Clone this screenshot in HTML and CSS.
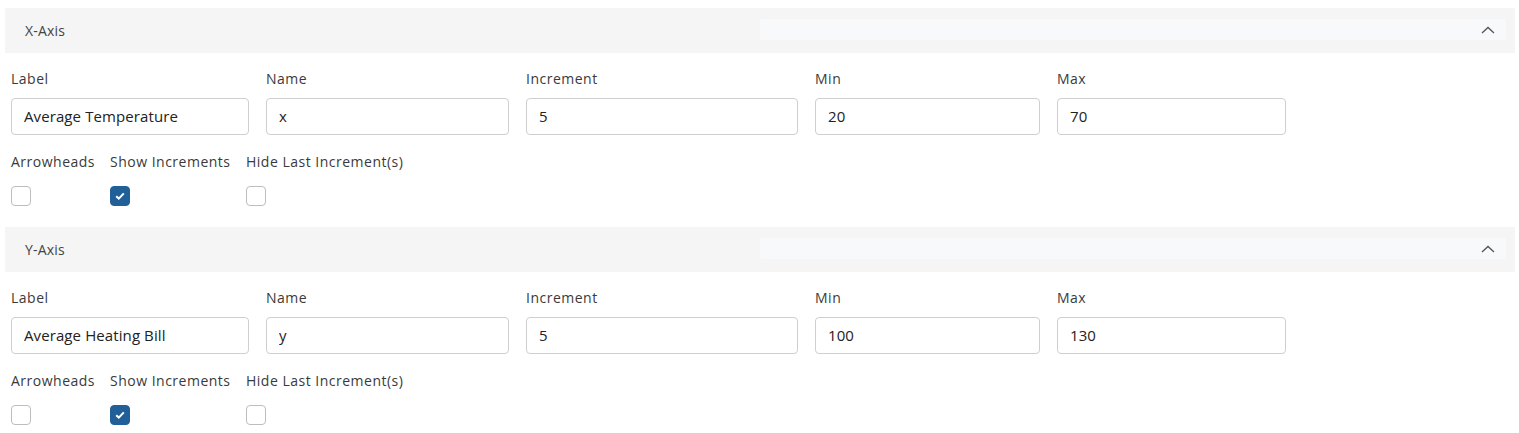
FILE: index.html
```html
<!DOCTYPE html>
<html lang="en">
<head>
  <meta charset="UTF-8">
  <meta name="viewport" content="width=device-width, initial-scale=1.0">
  <title>Axis settings</title>
  <link rel="stylesheet" href="styles.css">
</head>
<body>
  <div class="panel">
    <div class="section">
      <div class="section-head">
        <span class="section-title">X-Axis</span>
        <div class="head-fill"></div>
        <svg class="chevron" width="14" height="8" viewBox="0 0 14 8"><path d="M1 7 L7 1.5 L13 7" fill="none" stroke="#555" stroke-width="1.3"/></svg>
      </div>
      <div class="fields">
        <div class="field"><label>Label</label><input type="text" value="Average Temperature"></div>
        <div class="field"><label>Name</label><input type="text" value="x"></div>
        <div class="field"><label>Increment</label><input type="text" value="5"></div>
        <div class="field"><label>Min</label><input type="text" value="20"></div>
        <div class="field"><label>Max</label><input type="text" value="70"></div>
      </div>
      <div class="checks">
        <div class="check"><label>Arrowheads</label><span class="box"></span></div>
        <div class="check"><label>Show Increments</label><span class="box on"><svg width="10" height="8" viewBox="0 0 10 8"><path d="M1.2 4.2 L3.8 6.6 L8.8 1.4" fill="none" stroke="#fff" stroke-width="2"/></svg></span></div>
        <div class="check"><label>Hide Last Increment(s)</label><span class="box"></span></div>
      </div>
    </div>

    <div class="section">
      <div class="section-head">
        <span class="section-title">Y-Axis</span>
        <div class="head-fill"></div>
        <svg class="chevron" width="14" height="8" viewBox="0 0 14 8"><path d="M1 7 L7 1.5 L13 7" fill="none" stroke="#555" stroke-width="1.3"/></svg>
      </div>
      <div class="fields">
        <div class="field"><label>Label</label><input type="text" value="Average Heating Bill"></div>
        <div class="field"><label>Name</label><input type="text" value="y"></div>
        <div class="field"><label>Increment</label><input type="text" value="5"></div>
        <div class="field"><label>Min</label><input type="text" value="100"></div>
        <div class="field"><label>Max</label><input type="text" value="130"></div>
      </div>
      <div class="checks">
        <div class="check"><label>Arrowheads</label><span class="box"></span></div>
        <div class="check"><label>Show Increments</label><span class="box on"><svg width="10" height="8" viewBox="0 0 10 8"><path d="M1.2 4.2 L3.8 6.6 L8.8 1.4" fill="none" stroke="#fff" stroke-width="2"/></svg></span></div>
        <div class="check"><label>Hide Last Increment(s)</label><span class="box"></span></div>
      </div>
    </div>
  </div>
</body>
</html>
```

FILE: styles.css
```css
body {
  margin: 0;
  font-family: "Open Sans", sans-serif;
  color: #3a3a3a;
  background-color: white;
}
.panel {
  padding: 8px 4px 0 5px;
}
.section-head {
  position: relative;
  height: 45px;
  background-color: #f5f5f5;
  display: flex;
  align-items: center;
  padding: 0 0 0 20px;
}
.section-title {
  font-size: 14px;
  letter-spacing: 0.2px;
  color: #444;
  width: 735px;
}
.head-fill {
  flex: 1;
  height: 21px;
  margin-top: -3px;
  background-color: #f8f9fb;
  border-radius: 2px;
  margin-right: 9px;
}
.chevron {
  position: absolute;
  right: 20px;
  top: 18px;
}
.fields {
  display: grid;
  grid-template-columns: 238px 243px 272px 225px 229px;
  column-gap: 17px;
  padding: 16px 0 0 6px;
}
.field label {
  display: block;
  font-size: 14px;
  letter-spacing: 0.5px;
  height: 20px;
  line-height: 20px;
  margin-bottom: 9px;
}
input {
  display: block;
  width: 100%;
  box-sizing: border-box;
  height: 37px;
  border: 1px solid #cfcfcf;
  border-radius: 4px;
  padding: 0 12px 1px;
  font-family: inherit;
  font-size: 15px;
  letter-spacing: 0.1px;
  color: #222;
}
.checks {
  display: grid;
  grid-template-columns: 99px 136px auto;
  padding: 17px 0 21px 6px;
}
.check label {
  display: block;
  font-size: 14px;
  letter-spacing: 0.5px;
  height: 20px;
  line-height: 20px;
  margin-bottom: 14px;
  white-space: nowrap;
}
.box {
  display: flex;
  align-items: center;
  justify-content: center;
  box-sizing: border-box;
  width: 20px;
  height: 20px;
  border: 1px solid #bdbdbd;
  border-radius: 4px;
  background-color: white;
}
.box.on {
  background-color: #215f99;
  border-color: #215f99;
}
```
